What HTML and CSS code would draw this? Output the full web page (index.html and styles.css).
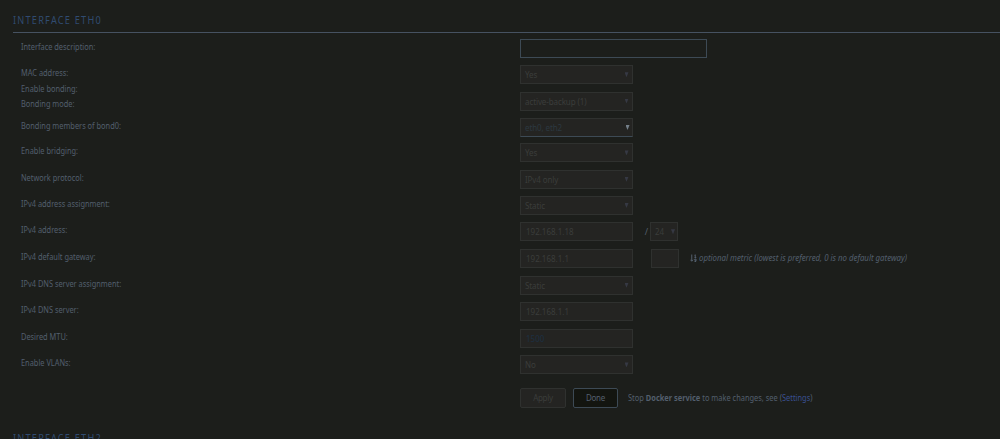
FILE: index.html
```
<!DOCTYPE html>
<html lang="en">
<head>
    <meta charset="UTF-8">
    <title>Network Settings</title>
    <link rel="stylesheet" href="styles.css">
</head>
<body>
    <h2 class="title"><span>Interface eth0</span></h2>
    <form class="settings">
        <div class="labels">
            <div class="row input">Interface description:</div>
            <div class="row line">MAC address:</div>
            <div class="row line">Enable bonding:</div>
            <div class="row mode">Bonding mode:</div>
            <div class="row members">Bonding members of bond0:</div>
            <div class="row">Enable bridging:</div>
            <div class="row">Network protocol:</div>
            <div class="row">IPv4 address assignment:</div>
            <div class="row input">IPv4 address:</div>
            <div class="row input">IPv4 default gateway:</div>
            <div class="row">IPv4 DNS server assignment:</div>
            <div class="row input">IPv4 DNS server:</div>
            <div class="row input">Desired MTU:</div>
            <div class="row">Enable VLANs:</div>
        </div>
        <div class="controls">
            <div class="row input"><div class="field wide"></div></div>
            <div class="row"><div class="field select">Yes</div></div>
            <div class="row"><div class="field select">active-backup (1)</div></div>
            <div class="row members"><div class="field select active">eth0, eth2</div></div>
            <div class="row"><div class="field select">Yes</div></div>
            <div class="row"><div class="field select">IPv4 only</div></div>
            <div class="row"><div class="field select">Static</div></div>
            <div class="row input">
                <div class="field text">192.168.1.18</div>
                <span class="slash">/</span>
                <div class="field select mask">24</div>
            </div>
            <div class="row input">
                <div class="field text">192.168.1.1</div>
                <div class="field metric"></div>
                <svg class="sort" viewBox="0 0 14 16" width="7" height="8">
                    <path d="M3.5 1v13M1 11.5l2.500 3 2.500-3" />
                    <path d="M9 2.500l1.500-1V7M9 7h3.500M12 14.500V10H9.500v2.500H12M9 15h3" />
                </svg>
                <i class="hint">optional metric (lowest is preferred, 0 is no default gateway)</i>
            </div>
            <div class="row"><div class="field select">Static</div></div>
            <div class="row input"><div class="field text">192.168.1.1</div></div>
            <div class="row input"><div class="field text mtu">1500</div></div>
            <div class="row"><div class="field select">No</div></div>
            <div class="actions">
                <button type="button" class="btn" disabled>Apply</button>
                <button type="button" class="btn done">Done</button>
                <span class="note">Stop <b>Docker service</b> to make changes, see (<a class="link">Settings</a>)</span>
            </div>
        </div>
    </form>
    <h2 class="title next"><span>Interface eth2</span></h2>
</body>
</html>
```
FILE: styles.css
```
* {
    box-sizing: border-box;
}
body {
    margin: 0;
    height: 439px;
    overflow: hidden;
    background: #1c1e1b;
    color: #535f6d;
    font-family: "Noto Sans", sans-serif;
    font-size: 8px;
    line-height: 15px;
}
.title {
    margin: 7px 0 0 13px;
    height: 26px;
    border-bottom: 1px solid #465261;
    color: #304b70;
    font-size: 11px;
    font-weight: normal;
    line-height: 26px;
    letter-spacing: 1.5px;
    text-transform: uppercase;
}
.title span {
    display: inline-block;
    transform: scaleX(0.83);
    transform-origin: left;
}
.title.next {
    margin-top: 17px;
}
.settings {
    display: flex;
    margin: 0;
    padding-top: 5.6px;
}
.labels {
    width: 520px;
    padding-left: 22.700px;
    transform: scaleX(0.925);
    transform-origin: left;
}
.row {
    display: flex;
    height: 26.3px;
}
.row.input {
    height: 26.7px;
}
.row.line {
    height: 15.6px;
}
.row.mode {
    height: 21.4px;
}
.row.members {
    height: 25.6px;
}
.field {
    width: 112.500px;
    height: 19px;
    padding: 0 4px;
    border: 1px solid #2f312f;
    background: #242422;
    color: #3b3d3b;
    line-height: 17px;
    letter-spacing: -0.1px;
}
.field.wide {
    width: 187px;
    border-color: #3d4a55;
    background: none;
}
.field.text {
    padding-left: 5px;
    letter-spacing: 0;
}
.field.mtu {
    color: #1d3042;
}
.select {
    display: flex;
    justify-content: space-between;
}
.select::after {
    content: "";
    width: 4px;
    height: 5px;
    margin: 6px -1px 0 0;
    background: #363944;
    clip-path: polygon(0 0, 100% 0, 50% 100%);
}
.select.active {
    border-bottom-color: #3d4a55;
    color: #2c3840;
}
.select.active::after {
    margin: 6px -2px 0 0;
    background: #75808a;
}
.slash {
    width: 17.500px;
    padding-right: 2px;
    font-size: 9px;
    line-height: 19px;
    text-align: right;
}
.field.mask {
    width: 28px;
    padding: 0 3px 0 4px;
}
.field.metric {
    width: 28px;
    margin-left: 18.500px;
}
.sort {
    margin: 5px 2px 0 11px;
    fill: none;
    stroke: #535f6d;
    stroke-width: 2;
}
.hint {
    line-height: 18px;
    transform: scaleX(0.98);
    transform-origin: left;
}
.actions {
    display: flex;
    align-items: center;
    margin-top: 6px;
    height: 20px;
}
.note {
    transform: scaleX(0.93);
    transform-origin: left;
}
.btn {
    width: 46px;
    height: 20px;
    margin-right: 7px;
    padding: 0;
    border: 1px solid #2f312f;
    border-radius: 2px;
    background: #242422;
    color: #3b3d3b;
    font: inherit;
    letter-spacing: -0.3px;
}
.btn.done {
    width: 45px;
    margin-right: 9.500px;
    border-color: #3d4a55;
    background: #131510;
    color: #535f6d;
}
.link {
    color: #394f91;
}
```
